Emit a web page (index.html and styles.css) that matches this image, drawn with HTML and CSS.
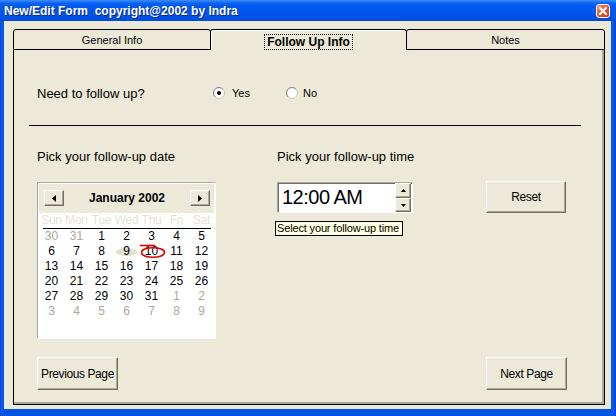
FILE: index.html
```html
<!DOCTYPE html>
<html>
<head>
<meta charset="utf-8">
<link rel="stylesheet" href="styles.css">
</head>
<body>
<div class="window">
  <div class="titlebar">
    <span class="title">New/Edit Form&nbsp; copyright@2002 by Indra</span>
    <span class="close">
      <svg width="14" height="14" viewBox="0 0 14 14">
        <defs>
          <linearGradient id="cg" x1="0" y1="0" x2="1" y2="1">
            <stop offset="0" stop-color="#f0a080"/>
            <stop offset="0.5" stop-color="#e0552f"/>
            <stop offset="1" stop-color="#c23c14"/>
          </linearGradient>
        </defs>
        <rect x="0.5" y="0.5" width="13" height="13" rx="2.5" fill="url(#cg)" stroke="#fff"/>
        <path d="M4 4 L10 10 M10 4 L4 10" stroke="#fff" stroke-width="2" stroke-linecap="square"/>
      </svg>
    </span>
  </div>
  <div class="client">
    <div class="tabctl">
      <div class="tabs">
        <div class="tab tab1">General Info</div>
        <div class="tab tab2 active"><span class="focus">Follow Up Info</span></div>
        <div class="tab tab3">Notes</div>
      </div>
      <div class="tabbody">
        <div class="q-row">
          <span class="q-label">Need to follow up?</span>
          <span class="radio yes">
            <svg class="rb" width="12" height="12" viewBox="0 0 12 12">
              <circle cx="6" cy="6" r="5.5" fill="#fff" stroke="#c9c6b8"/>
              <path d="M2.1 9.9 A5.5 5.5 0 0 1 9.9 2.1" fill="none" stroke="#8d8b80"/>
              <circle cx="6" cy="6" r="2" fill="#000"/>
            </svg>
            Yes
          </span>
          <span class="radio no">
            <svg class="rb" width="12" height="12" viewBox="0 0 12 12">
              <circle cx="6" cy="6" r="5.5" fill="#fff" stroke="#c9c6b8"/>
              <path d="M2.1 9.9 A5.5 5.5 0 0 1 9.9 2.1" fill="none" stroke="#8d8b80"/>
            </svg>
            No
          </span>
        </div>
        <div class="sep"></div>
        <div class="pick-row">
          <div class="col-date">
            <div class="pick-label">Pick your follow-up date</div>
            <div class="calendar">
              <div class="cal-head">
                <span class="cal-btn">
                  <svg width="4" height="7" viewBox="0 0 4 7"><path d="M4 0 L0 3.5 L4 7 Z" fill="#000"/></svg>
                </span>
                <span class="cal-title">January 2002</span>
                <span class="cal-btn">
                  <svg width="4" height="7" viewBox="0 0 4 7"><path d="M0 0 L4 3.5 L0 7 Z" fill="#000"/></svg>
                </span>
              </div>
              <div class="cal-dn">
                <span>Sun</span><span>Mon</span><span>Tue</span><span>Wed</span><span>Thu</span><span>Fri</span><span>Sat</span>
              </div>
              <div class="cal-line"></div>
              <div class="cal-days">
                <span class="o">30</span><span class="o">31</span><span>1</span><span>2</span><span>3</span><span>4</span><span>5</span>
                <span>6</span><span>7</span><span>8</span><span class="sel">9</span><span class="today">10<svg class="ring" width="27" height="15" viewBox="0 0 27 15"><path d="M1 1.5 H16" stroke="#e00000" stroke-width="1.6" fill="none"/><ellipse cx="14" cy="8.5" rx="11.5" ry="4.8" stroke="#e00000" stroke-width="1.6" fill="none"/></svg></span><span>11</span><span>12</span>
                <span>13</span><span>14</span><span>15</span><span>16</span><span>17</span><span>18</span><span>19</span>
                <span>20</span><span>21</span><span>22</span><span>23</span><span>24</span><span>25</span><span>26</span>
                <span>27</span><span>28</span><span>29</span><span>30</span><span>31</span><span class="o">1</span><span class="o">2</span>
                <span class="o">3</span><span class="o">4</span><span class="o">5</span><span class="o">6</span><span class="o">7</span><span class="o">8</span><span class="o">9</span>
              </div>
            </div>
          </div>
          <div class="col-time">
            <div class="pick-label">Pick your follow-up time</div>
            <div class="time-row">
              <div class="timebox">
                <span class="time-text">12:00 AM</span>
                <span class="spin">
                  <span class="spin-btn up">
                    <svg width="5" height="3" viewBox="0 0 5 3"><path d="M0 3 L2.5 0 L5 3 Z" fill="#000"/></svg>
                  </span>
                  <span class="spin-btn down">
                    <svg width="5" height="3" viewBox="0 0 5 3"><path d="M0 0 L2.5 3 L5 0 Z" fill="#000"/></svg>
                  </span>
                </span>
              </div>
              <button class="btn reset">Reset</button>
            </div>
            <div class="tooltip">Select your follow-up time</div>
          </div>
        </div>
        <div class="nav-row">
          <button class="btn nav">Previous Page</button>
          <button class="btn nav">Next Page</button>
        </div>
      </div>
    </div>
  </div>
</div>
</body>
</html>
```

FILE: styles.css
```css
* { box-sizing: border-box; }
html, body { margin: 0; padding: 0; }
body {
  width: 616px;
  height: 416px;
  overflow: hidden;
  background: #0054e3;
  font-family: "Liberation Sans", Arial, sans-serif;
  color: #000;
}
.window {
  width: 616px;
  height: 416px;
  display: flex;
  flex-direction: column;
  background: linear-gradient(to right, #0047d8 0, #0a5cf0 2px, #0054e3 4px, #0054e3 611px, #0a5cf0 613px, #0040c8 616px);
}
.titlebar {
  height: 21px;
  flex: none;
  display: flex;
  align-items: center;
  justify-content: space-between;
  padding: 0 6px 0 4px;
  background: linear-gradient(#3c8ffb 0, #0d63f3 3px, #0058ee 6px, #0055ea 14px, #004fe0 19px, #0047d6 21px);
}
.title {
  color: #fff;
  font-weight: bold;
  font-size: 12px;
  white-space: nowrap;
  text-shadow: 1px 1px 0 #0a2a8a;
}
.close { width: 14px; height: 14px; display: block; }
.close svg { display: block; }

.client {
  flex: none;
  height: 388px;
  margin: 0 5px 0 4px;
  background: #ece9d8;
  padding-top: 8px;
  padding-left: 9px;
}
.tabctl {
  width: 592px;
  height: 376px;
  display: flex;
  flex-direction: column;
}
.tabs {
  display: flex;
  height: 21px;
  flex: none;
}
.tab {
  height: 21px;
  border: 1px solid #000;
  border-radius: 3px 3px 0 0;
  display: flex;
  align-items: center;
  justify-content: center;
  font-size: 11px;
  background: #ece9d8;
  padding-top: 1px;
}
.tab1 { width: 198px; }
.tab2 { width: 197px; margin-left: -1px; }
.tab3 { width: 199px; margin-left: -1px; }
.tab.active {
  border-bottom: none;
  position: relative;
  z-index: 1;
  box-shadow: inset 1px 1px 0 #fff;
}
.focus {
  font-weight: bold;
  font-size: 12px;
  line-height: 12px;
  padding: 1px 2px;
  border: 1px dotted #000;
  margin-top: 2px;
}

.tabbody {
  height: 355px;
  flex: none;
  border: 1px solid #000;
  border-top: none;
  box-shadow: inset -2px -2px 0 #aca899;
  padding: 0 37px 0 23px;
  display: flex;
  flex-direction: column;
}
.q-row {
  margin-top: 35px;
  height: 16px;
  display: flex;
  align-items: center;
  font-size: 13px;
  flex: none;
}
.q-label { width: 176px; }
.radio {
  display: flex;
  align-items: center;
  font-size: 11px;
  gap: 7px;
}
.radio.yes { width: 73px; }
.radio.no { gap: 5px; }
.rb { display: block; flex: none; }

.sep {
  flex: none;
  margin-top: 24px;
  margin-left: -8px;
  width: 552px;
  height: 1px;
  background: #000;
}

.pick-row {
  margin-top: 23px;
  display: flex;
  flex: none;
}
.col-date { width: 240px; }
.pick-label {
  height: 16px;
  line-height: 16px;
  font-size: 13px;
  white-space: nowrap;
}
.calendar {
  margin-top: 17px;
  width: 179px;
  height: 157px;
  border: 1px solid;
  border-color: #aca899 #fff #fff #aca899;
  box-shadow: inset 1px 1px 0 #fff;
  background: #fff;
  padding: 1px;
}
.cal-head {
  height: 29px;
  background: #ece9d8;
  display: flex;
  align-items: flex-start;
  justify-content: space-between;
  padding: 6px 4px 0 5px;
}
.cal-btn {
  width: 20px;
  height: 16px;
  display: flex;
  align-items: center;
  justify-content: center;
  background: #ece9d8;
  border: 1px solid;
  border-color: #fff #716f64 #716f64 #fff;
  box-shadow: inset -1px -1px 0 #aca899;
}
.cal-btn svg { display: block; }
.cal-title {
  font-weight: bold;
  font-size: 12px;
  line-height: 16px;
}
.cal-dn {
  display: grid;
  grid-template-columns: repeat(7, 25px);
  height: 15px;
  line-height: 15px;
  font-size: 12px;
  letter-spacing: -0.3px;
  color: #e6e2d2;
  text-align: center;
  white-space: nowrap;
}
.cal-line {
  height: 1px;
  background: #000;
  margin: 0 3px 0 4px;
}
.cal-days {
  display: grid;
  grid-template-columns: repeat(7, 25px);
  grid-auto-rows: 15px;
  font-size: 12px;
  line-height: 15px;
  text-align: center;
}
.cal-days span { position: relative; }
.cal-days .o { color: #aca899; }
.cal-days .sel { z-index: 0; }
.cal-days .sel::before {
  content: "";
  position: absolute;
  left: 2px;
  top: 4px;
  width: 21px;
  height: 8px;
  border-radius: 50%;
  background: #e2dfcc;
  z-index: -1;
}
.ring {
  position: absolute;
  left: 0;
  top: 0;
  display: block;
}

.col-time { position: relative; }
.time-row {
  margin-top: 17px;
  display: flex;
  align-items: flex-start;
}
.timebox {
  width: 136px;
  height: 31px;
  border: 1px solid;
  border-color: #aca899 #fff #fff #aca899;
  box-shadow: inset 1px 1px 0 #716f64;
  background: #fff;
  display: flex;
  justify-content: space-between;
  padding: 0 1px 0 4px;
}
.time-text {
  font-size: 20px;
  letter-spacing: -0.5px;
  line-height: 29px;
  white-space: nowrap;
}
.spin {
  width: 16px;
  display: flex;
  flex-direction: column;
}
.spin-btn {
  background: #ece9d8;
  border: 1px solid;
  border-color: #fff #716f64 #716f64 #fff;
  box-shadow: inset -1px -1px 0 #aca899;
  display: flex;
  align-items: center;
  justify-content: center;
}
.spin-btn.up { height: 15px; }
.spin-btn.down { height: 14px; }
.spin-btn svg { display: block; }

.btn {
  font-family: "Liberation Sans", Arial, sans-serif;
  font-size: 12px;
  letter-spacing: -0.4px;
  color: #000;
  background: #ece9d8;
  border: 1px solid;
  border-color: #fff #716f64 #716f64 #fff;
  box-shadow: inset -1px -1px 0 #aca899;
  padding: 0;
  margin: 0;
}
.reset {
  width: 80px;
  height: 32px;
  margin-left: 73px;
  margin-top: -1px;
}
.tooltip {
  position: absolute;
  left: -2px;
  top: 72px;
  width: 128px;
  height: 15px;
  background: #ffffe1;
  border: 1px solid #000;
  font-size: 11px;
  letter-spacing: -0.15px;
  line-height: 13px;
  padding-left: 1px;
  white-space: nowrap;
}

.nav-row {
  margin-top: 18px;
  display: flex;
  justify-content: space-between;
  flex: none;
}
.nav {
  width: 81px;
  height: 33px;
}
```
